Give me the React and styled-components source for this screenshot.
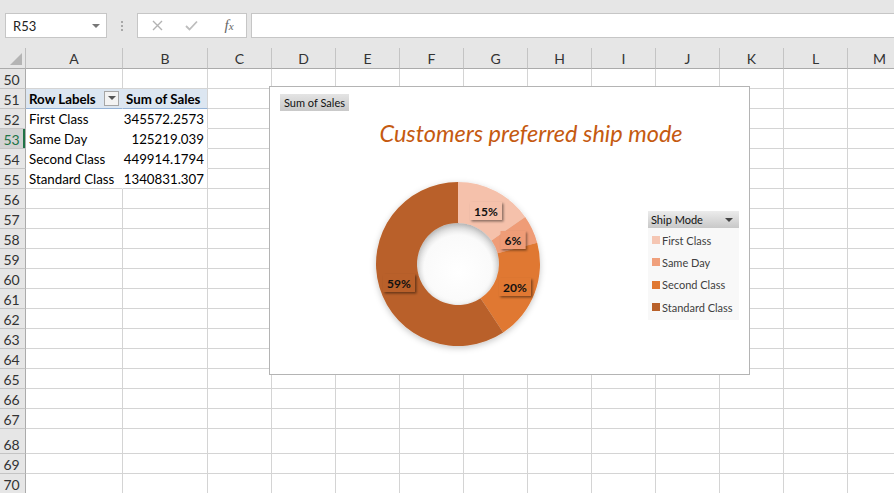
import React from "react";
import styled, { createGlobalStyle } from "styled-components";

const GlobalStyle = createGlobalStyle`
  html, body { margin: 0; padding: 0; background: #fff; }
  body { font-family: Lato, "Liberation Sans", sans-serif; overflow: hidden; }
  * { box-sizing: border-box; }
`;

const Page = styled.div`
  width: 894px;
  height: 493px;
  overflow: hidden;
  display: flex;
  flex-direction: column;
  background: #fff;
`;

const Toolbar = styled.div`
  height: 48px;
  flex: none;
  background: #e6e6e6;
  display: flex;
  align-items: flex-start;
  padding: 13px 0 0 5px;
`;

const NameBox = styled.div`
  width: 102px;
  height: 25px;
  background: #fff;
  border: 1px solid #c6c6c6;
  display: flex;
  align-items: center;
  justify-content: space-between;
  padding: 0 6px 0 7px;
  font-size: 13px;
  color: #222;
`;

const Caret = styled.span`
  width: 0;
  height: 0;
  border-left: 4px solid transparent;
  border-right: 4px solid transparent;
  border-top: 4px solid ${(p) => p.$color || "#777"};
`;

const Dots = styled.div`
  width: 30px;
  height: 25px;
  display: flex;
  flex-direction: column;
  align-items: center;
  justify-content: center;
  gap: 2px;
  & > span {
    width: 2px;
    height: 2px;
    background: #a8a8a8;
  }
`;

const FxBox = styled.div`
  width: 110px;
  height: 25px;
  background: #fff;
  border: 1px solid #c6c6c6;
  display: flex;
  align-items: center;
  padding-left: 12px;
`;

const FxIcon = styled.div`
  width: ${(p) => p.$w}px;
  height: 23px;
  display: flex;
  align-items: center;
  justify-content: center;
`;

const FxText = styled.span`
  font-family: "Liberation Serif", serif;
  font-style: italic;
  font-size: 15px;
  color: #666;
  & > sub {
    font-size: 11px;
    vertical-align: 0;
  }
`;

const FormulaInput = styled.div`
  flex: 1;
  height: 25px;
  margin-left: 4px;
  background: #fff;
  border: 1px solid #c6c6c6;
  border-right: none;
`;

const Sheet = styled.div`
  position: relative;
  flex: 1;
  display: flex;
  flex-direction: column;
  overflow: hidden;
`;

const Row = styled.div`
  display: flex;
  flex: none;
  height: ${(p) => p.$h}px;
`;

const Corner = styled.div`
  width: 26px;
  flex: none;
  height: 21px;
  background: #e6e6e6;
  border-right: 1px solid #bdbdbd;
  border-bottom: 1px solid #ababab;
  display: flex;
  align-items: flex-end;
  justify-content: flex-end;
  padding: 0 3px 3px 0;
`;

const CornerTri = styled.div`
  width: 0;
  height: 0;
  border-left: 12px solid transparent;
  border-bottom: 12px solid #b4b4b4;
`;

const ColHeader = styled.div`
  width: ${(p) => p.$w}px;
  flex: none;
  height: 21px;
  background: #e6e6e6;
  border-right: 1px solid #c4c4c4;
  border-bottom: 1px solid #ababab;
  display: flex;
  align-items: center;
  justify-content: center;
  font-size: 14px;
  color: #333;
  padding-top: 1px;
`;

const RowHeader = styled.div`
  width: 26px;
  flex: none;
  height: 100%;
  background: ${(p) => (p.$selected ? "#d2d2d2" : "#e6e6e6")};
  color: ${(p) => (p.$selected ? "#217346" : "#333")};
  border-right: 1px solid #ababab;
  border-bottom: 1px solid #c4c4c4;
  box-shadow: ${(p) => (p.$selected ? "inset -2px 0 0 #217346" : "none")};
  display: flex;
  align-items: flex-end;
  justify-content: center;
  padding-right: 2px;
  font-size: 14px;
`;

const Cell = styled.div`
  width: ${(p) => p.$w}px;
  flex: none;
  height: 100%;
  border-right: 1px solid ${(p) => p.$rc || "#d4d4d4"};
  border-bottom: 1px solid ${(p) => p.$bc || "#d4d4d4"};
  background: ${(p) => p.$bg || "#fff"};
  display: flex;
  align-items: flex-end;
  justify-content: ${(p) => (p.$right ? "flex-end" : "space-between")};
  padding: 0 3px 1px 3px;
  font-size: 13.3px;
  font-weight: ${(p) => (p.$bold ? 700 : 400)};
  color: #000;
  white-space: nowrap;
`;

const FilterBtn = styled.span`
  width: 15px;
  height: 15px;
  align-self: center;
  background: #f3f3f3;
  border: 1px solid #a6a6a6;
  display: flex;
  align-items: center;
  justify-content: center;
`;

const Chart = styled.div`
  position: absolute;
  left: 269px;
  top: 38px;
  width: 481px;
  height: 289px;
  background: #fff;
  border: 1px solid #b4b4b4;
  display: flex;
  flex-direction: column;
  padding: 7px 0 0 10px;
`;

const FieldButton = styled.div`
  align-self: flex-start;
  height: 17px;
  padding: 0 4px;
  display: flex;
  align-items: center;
  background: linear-gradient(#e4e4e4, #c9c9c9);
  font-size: 11px;
  color: #111;
  white-space: nowrap;
`;

const Title = styled.div`
  margin-top: 9px;
  height: 26px;
  line-height: 26px;
  text-align: center;
  padding-left: 33px;
  font-size: 23.5px;
  font-style: italic;
  color: #c55a11;
  white-space: nowrap;
`;

const ChartBody = styled.div`
  display: flex;
  align-items: flex-start;
  margin-top: 18px;
`;

const DonutSvg = styled.svg`
  flex: none;
  margin-left: 78px;
  overflow: visible;
`;

const Legend = styled.div`
  margin-left: 90px;
  margin-top: 47px;
  width: 91px;
  display: flex;
  flex-direction: column;
`;

const LegendHead = styled.div`
  height: 17px;
  padding: 0 6px 0 3px;
  display: flex;
  align-items: center;
  justify-content: space-between;
  background: linear-gradient(#ececec, #c8c8c8);
  font-size: 11px;
  color: #111;
`;

const LegendList = styled.div`
  background: #f8f8f8;
  padding: 1px 0 2px 4px;
  display: flex;
  flex-direction: column;
`;

const LegendItem = styled.div`
  height: 22.3px;
  display: flex;
  align-items: center;
  gap: 2px;
  font-size: 11px;
  color: #404040;
  white-space: nowrap;
`;

const Swatch = styled.span`
  width: 8px;
  height: 8px;
  background: ${(p) => p.$c};
  flex: none;
`;

const columns = [
  ["A", 97],
  ["B", 85],
  ["C", 64],
  ["D", 64],
  ["E", 64],
  ["F", 64],
  ["G", 64],
  ["H", 64],
  ["I", 64],
  ["J", 64],
  ["K", 64],
  ["L", 64],
  ["M", 64],
];

const rows = [];
for (let n = 50; n <= 70; n++) rows.push({ n, h: n === 68 ? 25 : 20 });

const pivot = {
  52: ["First Class", "345572.2573"],
  53: ["Same Day", "125219.039"],
  54: ["Second Class", "449914.1794"],
  55: ["Standard Class", "1340831.307"],
};

const segs = [
  { name: "First Class", v: 345572.2573, color: "#f5c1ab", label: "15%", lx: 128, ly: 47, w: 32 },
  { name: "Same Day", v: 125219.039, color: "#ef9c77", label: "6%", lx: 155, ly: 76, w: 25 },
  { name: "Second Class", v: 449914.1794, color: "#e07832", label: "20%", lx: 157, ly: 123, w: 32 },
  { name: "Standard Class", v: 1340831.307, color: "#b9612a", label: "59%", lx: 41, ly: 119, w: 32 },
];

const legendColors = ["#f5c6b3", "#f0a07c", "#e07832", "#b9612a"];

function pt(cx, cy, r, a) {
  const rad = (a * Math.PI) / 180;
  return [cx + r * Math.sin(rad), cy - r * Math.cos(rad)];
}

function arcPath(cx, cy, r0, r1, a0, a1) {
  const large = a1 - a0 > 180 ? 1 : 0;
  const [x1, y1] = pt(cx, cy, r1, a0);
  const [x2, y2] = pt(cx, cy, r1, a1);
  const [x3, y3] = pt(cx, cy, r0, a1);
  const [x4, y4] = pt(cx, cy, r0, a0);
  return `M${x1} ${y1} A${r1} ${r1} 0 ${large} 1 ${x2} ${y2} L${x3} ${y3} A${r0} ${r0} 0 ${large} 0 ${x4} ${y4} Z`;
}

function Donut() {
  const total = segs.reduce((s, d) => s + d.v, 0);
  let acc = 0;
  const cx = 100,
    cy = 100;
  return (
    <DonutSvg width="200" height="200" viewBox="0 0 200 200">
      <defs>
        <filter id="ringShadow" x="-20%" y="-20%" width="140%" height="140%">
          <feDropShadow dx="0" dy="2" stdDeviation="3" floodColor="#000" floodOpacity="0.22" />
        </filter>
        <filter id="lblShadow" x="-30%" y="-30%" width="160%" height="170%">
          <feDropShadow dx="1.5" dy="1.5" stdDeviation="1.2" floodColor="#000" floodOpacity="0.45" />
        </filter>
        <radialGradient id="hole" cx="0.5" cy="0.55" r="0.55" fx="0.5" fy="0.6">
          <stop offset="0%" stopColor="#ffffff" />
          <stop offset="75%" stopColor="#fafafa" />
          <stop offset="100%" stopColor="#d6d6d6" />
        </radialGradient>
      </defs>
      <circle cx={cx} cy={cy} r="41.5" fill="url(#hole)" />
      <g filter="url(#ringShadow)">
        {segs.map((s) => {
          const a0 = (acc / total) * 360;
          acc += s.v;
          const a1 = (acc / total) * 360;
          return <path key={s.name} d={arcPath(cx, cy, 41, 82, a0, a1)} fill={s.color} />;
        })}
      </g>
      {segs.map((s) => (
        <g key={s.label}>
          <rect
            x={s.lx - s.w / 2}
            y={s.ly - 9}
            width={s.w}
            height="18"
            fill={s.color}
            filter="url(#lblShadow)"
          />
          <text
            x={s.lx}
            y={s.ly + 4.5}
            textAnchor="middle"
            fontFamily="Lato, 'Liberation Sans', sans-serif"
            fontSize="12"
            fontWeight="700"
            fill="#111"
          >
            {s.label}
          </text>
        </g>
      ))}
    </DonutSvg>
  );
}

function renderCells(n) {
  return columns.map(([c, w]) => {
    const key = c + n;
    if (n === 51 && c === "A")
      return (
        <Cell key={key} $w={w} $bold $bg="#dce6f1" $rc="#dce6f1" $bc="#95b3d7">
          <span>Row Labels</span>
          <FilterBtn>
            <Caret $color="#555" />
          </FilterBtn>
        </Cell>
      );
    if (n === 51 && c === "B")
      return (
        <Cell key={key} $w={w} $bold $bg="#dce6f1" $bc="#95b3d7">
          <span>Sum of Sales</span>
        </Cell>
      );
    if (pivot[n] && (c === "A" || c === "B")) {
      const last = n === 55;
      const bc = last ? "#d4d4d4" : "#ffffff";
      if (c === "A")
        return (
          <Cell key={key} $w={w} $rc="#ffffff" $bc={bc}>
            <span>{pivot[n][0]}</span>
          </Cell>
        );
      return (
        <Cell key={key} $w={w} $right $bc={bc}>
          <span>{pivot[n][1]}</span>
        </Cell>
      );
    }
    return <Cell key={key} $w={w} />;
  });
}

export default function App() {
  return (
    <>
      <GlobalStyle />
      <Page>
        <Toolbar>
          <NameBox>
            <span>R53</span>
            <Caret />
          </NameBox>
          <Dots>
            <span />
            <span />
            <span />
          </Dots>
          <FxBox>
            <FxIcon $w={14}>
              <svg width="11" height="11" viewBox="0 0 11 11">
                <path d="M1 1 L10 10 M10 1 L1 10" stroke="#b3b3b3" strokeWidth="1.4" />
              </svg>
            </FxIcon>
            <FxIcon $w={54}>
              <svg width="13" height="11" viewBox="0 0 13 11">
                <path d="M1 6 L4.5 9.5 L12 1.5" stroke="#bdbdbd" strokeWidth="1.8" fill="none" />
              </svg>
            </FxIcon>
            <FxIcon $w={22}>
              <FxText>
                f<sub>x</sub>
              </FxText>
            </FxIcon>
          </FxBox>
          <FormulaInput />
        </Toolbar>
        <Sheet>
          <Row $h={21}>
            <Corner>
              <CornerTri />
            </Corner>
            {columns.map(([c, w]) => (
              <ColHeader key={c} $w={w}>
                {c}
              </ColHeader>
            ))}
          </Row>
          {rows.map(({ n, h }) => (
            <Row key={n} $h={h}>
              <RowHeader $selected={n === 53}>{n}</RowHeader>
              {renderCells(n)}
            </Row>
          ))}
          <Chart>
            <FieldButton>Sum of Sales</FieldButton>
            <Title>Customers preferred ship mode</Title>
            <ChartBody>
              <Donut />
              <Legend>
                <LegendHead>
                  <span>Ship Mode</span>
                  <Caret $color="#444" />
                </LegendHead>
                <LegendList>
                  {segs.map((s, i) => (
                    <LegendItem key={s.name}>
                      <Swatch $c={legendColors[i]} />
                      <span>{s.name}</span>
                    </LegendItem>
                  ))}
                </LegendList>
              </Legend>
            </ChartBody>
          </Chart>
        </Sheet>
      </Page>
    </>
  );
}
